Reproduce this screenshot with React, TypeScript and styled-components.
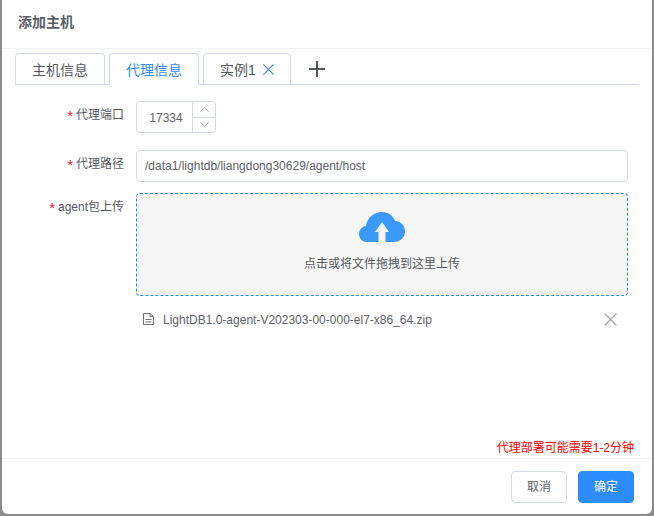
import React from 'react';
import styled, { createGlobalStyle } from 'styled-components';

const GlobalStyle = createGlobalStyle`
  html, body {
    margin: 0;
    padding: 0;
    background: #8c8c8c;
  }
  body {
    font-family: "Liberation Sans", "Noto Sans CJK SC", sans-serif;
  }
`;

const Backdrop = styled.div`
  width: 654px;
  height: 516px;
  padding: 0 2px 2px;
  box-sizing: border-box;
  overflow: hidden;
`;

const Dialog = styled.div`
  height: 514px;
  background: #fff;
  border-radius: 0 0 6px 6px;
  display: flex;
  flex-direction: column;
`;

const Header = styled.div`
  height: 49px;
  flex: none;
  box-sizing: border-box;
  padding: 14px 0 0 16px;
  border-bottom: 1px solid #f2f3f5;
  font-size: 14px;
  line-height: 16px;
  font-weight: 700;
  color: #5a5e66;
`;

const Body = styled.div`
  flex: 1;
  padding: 4px 13px 0;
  display: flex;
  flex-direction: column;
  min-height: 0;
`;

const TabBar = styled.div`
  display: flex;
  align-items: flex-end;
  gap: 4px;
  height: 32px;
  box-sizing: border-box;
  border-bottom: 1px solid #d3dae6;
`;

const Tab = styled.div<{ $active?: boolean; $width: number }>`
  width: ${p => p.$width}px;
  height: 32px;
  margin-bottom: -1px;
  box-sizing: border-box;
  border: 1px solid #d3dae6;
  border-bottom: ${p => (p.$active ? '1px solid #fff' : '1px solid #d3dae6')};
  border-radius: 4px 4px 0 0;
  display: flex;
  align-items: center;
  justify-content: center;
  gap: 7px;
  font-size: 14px;
  color: ${p => (p.$active ? '#2d8cff' : '#55585f')};
`;

const AddTab = styled.div`
  margin-left: 14px;
  height: 32px;
  margin-bottom: -1px;
  display: flex;
  align-items: center;
  color: #53565c;
`;

const Form = styled.div`
  padding: 16px 11px 0 0;
  display: flex;
  flex-direction: column;
`;

const Row = styled.div<{ $gap: number }>`
  display: grid;
  grid-template-columns: 109px 492px;
  column-gap: 12px;
  margin-bottom: ${p => p.$gap}px;
`;

const Label = styled.div`
  text-align: right;
  font-size: 12px;
  line-height: 16px;
  padding-top: 6px;
  color: #55585f;
`;

const Star = styled.span`
  color: #f5122d;
  font-size: 15px;
  line-height: 0;
  vertical-align: -2px;
  margin-right: 3px;
`;

const NumberBox = styled.div`
  width: 80px;
  height: 32px;
  box-sizing: border-box;
  border: 1px solid #d3dae6;
  border-radius: 4px;
  display: flex;
`;

const NumberValue = styled.div`
  flex: 1;
  font-size: 12px;
  line-height: 33px;
  text-align: center;
  color: #606266;
  padding-left: 3px;
`;

const Steppers = styled.div`
  width: 22px;
  border-left: 1px solid #d3dae6;
  display: flex;
  flex-direction: column;
`;

const Step = styled.div<{ $down?: boolean }>`
  flex: 1;
  display: flex;
  align-items: center;
  justify-content: center;
  color: #a8abb2;
  border-top: ${p => (p.$down ? '1px solid #d3dae6' : 'none')};
`;

const TextInput = styled.div`
  height: 32px;
  box-sizing: border-box;
  border: 1px solid #d3dae6;
  border-radius: 4px;
  padding-left: 8px;
  font-size: 12px;
  line-height: 30px;
  color: #606266;
`;

const DropZone = styled.div`
  height: 103px;
  box-sizing: border-box;
  border: 1px dashed #2d8cf0;
  border-radius: 4px;
  background: #f6f6f6;
  display: flex;
  flex-direction: column;
  align-items: center;
  padding-top: 18px;
`;

const DropText = styled.div`
  margin-top: 14px;
  font-size: 12px;
  line-height: 16px;
  color: #55585f;
`;

const FileRow = styled.div`
  margin-top: 14px;
  display: flex;
  align-items: center;
  height: 20px;
  padding: 0 11px 0 7px;
  font-size: 12px;
  color: #606266;
`;

const FileName = styled.span`
  margin-left: 9px;
  flex: 1;
`;

const RowGlyph = styled.span`
  display: flex;
  margin-bottom: 2px;
`;

const Note = styled.div`
  margin-top: auto;
  padding: 0 5px 2px 0;
  text-align: right;
  font-size: 12px;
  line-height: 16px;
  color: #ff0000;
`;

const Footer = styled.div`
  height: 56px;
  flex: none;
  box-sizing: border-box;
  border-top: 1px solid #f2f3f5;
  padding: 12px 18px 0 0;
  display: flex;
  justify-content: flex-end;
  gap: 11px;
`;

const Button = styled.div<{ $primary?: boolean }>`
  width: 56px;
  height: 32px;
  box-sizing: border-box;
  border-radius: 4px;
  border: 1px solid ${p => (p.$primary ? '#2d8cff' : '#d3dae6')};
  background: ${p => (p.$primary ? '#2d8cff' : '#fff')};
  color: ${p => (p.$primary ? '#fff' : '#606266')};
  font-size: 12px;
  line-height: 30px;
  text-align: center;
`;

const ChevronUp = () => (
  <svg width="9" height="5" viewBox="0 0 9 5" fill="none" stroke="currentColor" strokeWidth="1">
    <path d="M.3 4.7 4.500.7l4.200 4" />
  </svg>
);

const ChevronDown = () => (
  <svg width="9" height="5" viewBox="0 0 9 5" fill="none" stroke="currentColor" strokeWidth="1">
    <path d="M.3.300l4.200 4 4.200-4" />
  </svg>
);

const CloseIcon = ({ size, color, weight }: { size: number; color: string; weight: number }) => (
  <svg width={size} height={size} viewBox="0 0 12 12" fill="none" stroke={color} strokeWidth={(weight * 12) / size}>
    <path d="M.5.5l11 11M11.5.5l-11 11" />
  </svg>
);

const PlusIcon = () => (
  <svg width="16" height="16" viewBox="0 0 16 16" fill="none" stroke="currentColor" strokeWidth="2">
    <path d="M8 0v16M0 8h16" />
  </svg>
);

const FileIcon = () => (
  <svg width="11" height="12" viewBox="0 0 11 12" fill="none" stroke="#6b6e75" strokeWidth="1">
    <path d="M.5.500h6.500l3.500 3v8h-10z" />
    <path d="M7 .5v3h3.500M2.500 6.500h6M2.500 9h6" />
  </svg>
);

const CloudIcon = () => (
  <svg width="46" height="30" viewBox="0 0 46 30">
    <path
      fill="#3a99fb"
      d="M8 30C3.500 30 0 26.500 0 22c0-4 3-7.500 7-8C8 6 15 0 23 0c6 0 11 3.500 13 9 5.500 0 10 4.500 10 10.500S41 30 35 30h-8.500V20H30L23 10l-7 10h3.500v10z"
    />
  </svg>
);

export default function App() {
  return (
    <Backdrop>
      <GlobalStyle />
      <Dialog>
        <Header>添加主机</Header>
        <Body>
          <TabBar>
            <Tab $width={90}>主机信息</Tab>
            <Tab $width={90} $active>代理信息</Tab>
            <Tab $width={88}>
              实例1
              <CloseIcon size={11} color="#3f7fd0" weight={1.1} />
            </Tab>
            <AddTab>
              <PlusIcon />
            </AddTab>
          </TabBar>
          <Form>
            <Row $gap={17}>
              <Label><Star>*</Star>代理端口</Label>
              <NumberBox>
                <NumberValue>17334</NumberValue>
                <Steppers>
                  <Step><ChevronUp /></Step>
                  <Step $down><ChevronDown /></Step>
                </Steppers>
              </NumberBox>
            </Row>
            <Row $gap={11}>
              <Label><Star>*</Star>代理路径</Label>
              <TextInput>/data1/lightdb/liangdong30629/agent/host</TextInput>
            </Row>
            <Row $gap={0}>
              <Label><Star>*</Star>agent包上传</Label>
              <div>
                <DropZone>
                  <CloudIcon />
                  <DropText>点击或将文件拖拽到这里上传</DropText>
                </DropZone>
                <FileRow>
                  <RowGlyph><FileIcon /></RowGlyph>
                  <FileName>LightDB1.0-agent-V202303-00-000-el7-x86_64.zip</FileName>
                  <RowGlyph><CloseIcon size={13} color="#a3a5aa" weight={1.2} /></RowGlyph>
                </FileRow>
              </div>
            </Row>
          </Form>
          <Note>代理部署可能需要1-2分钟</Note>
        </Body>
        <Footer>
          <Button>取消</Button>
          <Button $primary>确定</Button>
        </Footer>
      </Dialog>
    </Backdrop>
  );
}
